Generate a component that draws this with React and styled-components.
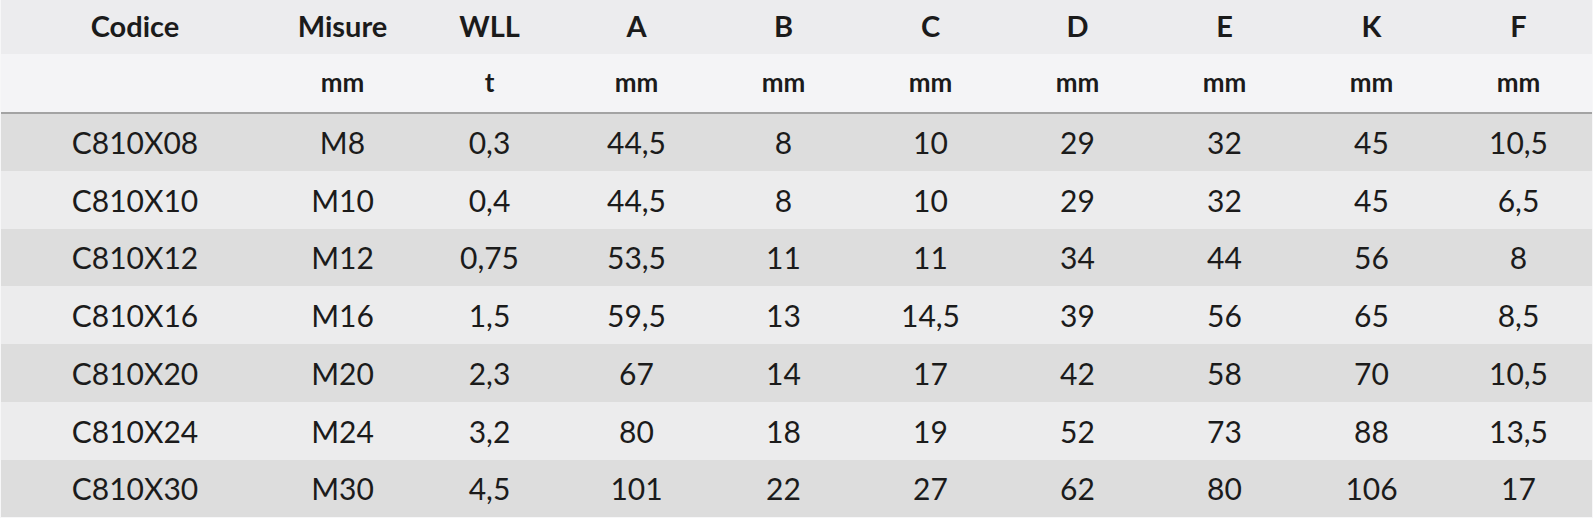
import React from "react";
import styled, { createGlobalStyle } from "styled-components";

const Global = createGlobalStyle`
  html, body { margin: 0; padding: 0; background: #f7f7f8; }
  body { font-family: Lato, "Open Sans", sans-serif; color: #1b1b1b; }
`;

const Table = styled.table`
  margin: 0 1px;
  width: calc(100% - 2px);
  border-collapse: collapse;
  table-layout: fixed;
`;

const HeadRow = styled.tr`
  height: ${(p) => p.$h}px;
  background: ${(p) => p.$bg};
  border-bottom: ${(p) => (p.$line ? "2px solid #a3a3a3" : "none")};
`;

const Th = styled.th`
  padding: 0 0 ${(p) => p.$lift}px;
  text-align: center;
  vertical-align: middle;
  font-weight: 700;
  font-size: ${(p) => p.$size}px;
  line-height: 1;
  color: #1b1b1b;
`;

const Row = styled.tr`
  height: 57.75px;
  background: ${(p) => (p.$odd ? "#dddddd" : "#ececed")};
`;

const Td = styled.td`
  padding: 0;
  text-align: center;
  vertical-align: middle;
  font-size: 30px;
  line-height: 1;
  font-weight: 400;
  color: #1b1b1b;
`;

const headers = ["Codice", "Misure", "WLL", "A", "B", "C", "D", "E", "K", "F"];
const units = ["", "mm", "t", "mm", "mm", "mm", "mm", "mm", "mm", "mm"];
const rows = [
  ["C810X08", "M8", "0,3", "44,5", "8", "10", "29", "32", "45", "10,5"],
  ["C810X10", "M10", "0,4", "44,5", "8", "10", "29", "32", "45", "6,5"],
  ["C810X12", "M12", "0,75", "53,5", "11", "11", "34", "44", "56", "8"],
  ["C810X16", "M16", "1,5", "59,5", "13", "14,5", "39", "56", "65", "8,5"],
  ["C810X20", "M20", "2,3", "67", "14", "17", "42", "58", "70", "10,5"],
  ["C810X24", "M24", "3,2", "80", "18", "19", "52", "73", "88", "13,5"],
  ["C810X30", "M30", "4,5", "101", "22", "27", "62", "80", "106", "17"],
];

export default function App() {
  return (
    <>
      <Global />
      <Table>
        <colgroup>
          <col style={{ width: "268px" }} />
          {headers.slice(1).map((h) => (
            <col key={h} />
          ))}
        </colgroup>
        <thead>
          <HeadRow $h={54} $bg="#ececee">
            {headers.map((h) => (
              <Th key={h} $size={29} $lift={3}>{h}</Th>
            ))}
          </HeadRow>
          <HeadRow $h={59} $bg="#f4f4f6" $line>
            {units.map((u, i) => (
              <Th key={i} $size={26} $lift={2}>{u}</Th>
            ))}
          </HeadRow>
        </thead>
        <tbody>
          {rows.map((r, i) => (
            <Row key={r[0]} $odd={i % 2 === 0}>
              {r.map((c, j) => (
                <Td key={j}>{c}</Td>
              ))}
            </Row>
          ))}
        </tbody>
      </Table>
    </>
  );
}
